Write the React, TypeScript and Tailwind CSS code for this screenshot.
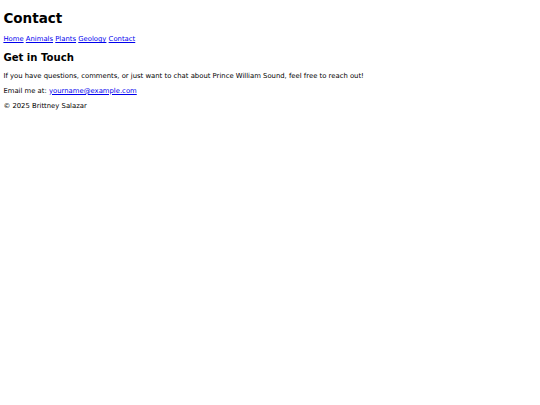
export default function App() {
  return (
    <div className="min-h-screen bg-white px-[3.4px] text-[6.85px] leading-[normal] text-black [font-family:'DejaVu_Sans',sans-serif]">
      <div className="h-px" />
      <h1 className="my-[9px] text-[13.5px] font-bold">Contact</h1>
      <nav>
        <a href="#" className="text-[#0000ee] underline">Home</a>{' '}
        <a href="#" className="text-[#0000ee] underline">Animals</a>{' '}
        <a href="#" className="text-[#0000ee] underline">Plants</a>{' '}
        <a href="#" className="text-[#0000ee] underline">Geology</a>{' '}
        <a href="#" className="text-[#0000ee] underline">Contact</a>
      </nav>
      <h2 className="mt-[9.4px] mb-[8.4px] text-[10.1px] font-bold">Get in Touch</h2>
      <p className="mt-[7.6px] mb-[6.9px]">
        If you have questions, comments, or just want to chat about Prince William Sound, feel free to reach out!
      </p>
      <p className="my-[6.9px]">
        Email me at: <a href="#" className="text-[#0000ee] underline">yourname@example.com</a>
      </p>
      <footer>
        <p className="my-[6.9px]">© 2025 Brittney Salazar</p>
      </footer>
    </div>
  );
}
